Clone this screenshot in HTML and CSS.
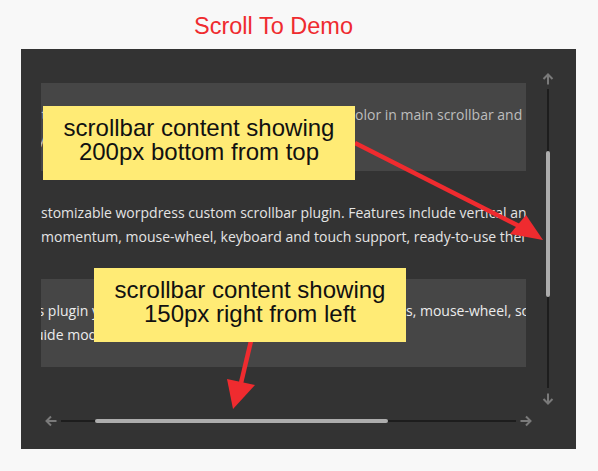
FILE: index.html
```html
<!DOCTYPE html>
<html lang="en">
<head>
<meta charset="utf-8">
<title>Scroll To Demo</title>
<link rel="stylesheet" href="styles.css">
</head>
<body>
<header class="header">
  <h1 class="title">Scroll To Demo</h1>
</header>
<div class="demo">
  <div class="viewport">
    <div class="content">
      <div class="panel panel-muted">
        <p class="line line-cut-s"><span class="lead lead-top">lt can also have a custom scrollbar theme and a custom scrollbar c</span>olor in main scrollbar and content</p>
        <p class="line line-cut-s">y and thumb on the rail.</p>
      </div>
      <div class="para">
        <p class="line">stomizable worpdress custom scrollbar plugin. Features include vertical and/or horizontal</p>
        <p class="line">momentum, mouse-wheel, keyboard and touch support, ready-to-use themes and customization</p>
      </div>
      <div class="panel panel-bright">
        <p class="line line-cut-is"><span class="lead lead-bottom">is plugin you can use a custom scrollbar with scrolling momentum and buttons</span>s, mouse-wheel, scroll</p>
        <p class="line line-cut-u">uide mode and more.</p>
      </div>
    </div>
  </div>
  <div class="vbar">
    <svg class="arrow" viewBox="0 0 12 12"><path d="M6 11.5V1.5M1.5 6L6 1.5L10.5 6"/></svg>
    <div class="vtrack"><div class="vthumb"></div></div>
    <svg class="arrow" viewBox="0 0 12 12"><path d="M6 0.5V10.5M1.5 6L6 10.5L10.5 6"/></svg>
  </div>
  <div class="hbar">
    <svg class="arrow" viewBox="0 0 12 12"><path d="M11.5 6H1.5M6 1.5L1.5 6L6 10.5"/></svg>
    <div class="htrack"><div class="hthumb"></div></div>
    <svg class="arrow" viewBox="0 0 12 12"><path d="M0.5 6H10.5M6 1.5L10.5 6L6 10.5"/></svg>
  </div>
</div>
<svg class="pointers" viewBox="0 0 598 471">
  <line x1="355" y1="143" x2="521" y2="227"/>
  <polygon points="543,240 526,215 510,234"/>
  <line x1="251" y1="341" x2="241" y2="383"/>
  <polygon points="233,409 227,379 255,385"/>
</svg>
<div class="note note-top">scrollbar content showing<br>200px bottom from top</div>
<div class="note note-bottom">scrollbar content showing<br>150px right from left</div>
</body>
</html>
```

FILE: styles.css
```css
html, body {
  margin: 0;
  padding: 0;
}
body {
  background: #f8f8f8;
  width: 598px;
  height: 471px;
  overflow: hidden;
  position: relative;
  font-family: "Liberation Sans", Arial, sans-serif;
}
.header {
  height: 49px;
  box-sizing: border-box;
  padding-top: 13px;
}
.title {
  margin: 0;
  width: 547px;
  text-align: center;
  font-family: "Liberation Sans", Arial, sans-serif;
  font-weight: normal;
  font-size: 23.5px;
  line-height: 26px;
  color: #ef2b2f;
}
.demo {
  margin-left: 21px;
  width: 555px;
  height: 400px;
  box-sizing: border-box;
  padding: 20px 0 0 20px;
  background: #333333;
  display: grid;
  grid-template-columns: 485px 1fr;
  grid-template-rows: 340px 1fr;
}
.viewport {
  overflow: hidden;
  font-family: "Open Sans", "Noto Sans", sans-serif;
  font-size: 14px;
  line-height: 24px;
}
.content {
  padding-top: 14px;
}
.line {
  margin: 0;
  white-space: nowrap;
}
.line-cut-s {
  text-indent: -3px;
}
.line-cut-is {
  text-indent: -7px;
}
.line-cut-u {
  text-indent: -6px;
}
.lead {
  display: inline-block;
  overflow: hidden;
  text-align: left;
  text-indent: 0;
  vertical-align: top;
}
.lead-top {
  width: 317px;
}
.lead-bottom {
  width: 372px;
}
.panel {
  background: #464646;
  padding: 20px 0;
  width: 700px;
}
.panel-muted {
  color: #bdbdbd;
}
.panel-bright {
  color: #ececec;
}
.para {
  color: #e4e4e4;
  padding: 30px 0;
}
.arrow {
  width: 12px;
  height: 12px;
  display: block;
  flex: none;
}
.arrow path {
  fill: none;
  stroke: #7a7a7a;
  stroke-width: 2;
}
.vbar {
  grid-column: 2;
  grid-row: 1;
  margin: 4px 0 0 16px;
  width: 12px;
  height: 332px;
  display: flex;
  flex-direction: column;
  align-items: center;
}
.vtrack {
  margin: 4px 0 5px;
  width: 2px;
  height: 299px;
  background: #1d1d1d;
  padding-top: 62px;
  box-sizing: border-box;
}
.vthumb {
  width: 4px;
  height: 146px;
  margin-left: -1px;
  background: #adadad;
  border-radius: 2px;
}
.hbar {
  grid-column: 1 / span 2;
  grid-row: 2;
  margin: 6px 0 0 4px;
  height: 12px;
  display: flex;
  align-items: center;
}
.htrack {
  margin: 0 4px;
  width: 455px;
  height: 2px;
  background: #1d1d1d;
  padding-left: 34px;
  box-sizing: border-box;
}
.hthumb {
  width: 293px;
  height: 4px;
  margin-top: -1px;
  background: #adadad;
  border-radius: 2px;
}
.pointers {
  position: absolute;
  left: 0;
  top: 0;
  width: 598px;
  height: 471px;
  pointer-events: none;
}
.pointers line {
  stroke: #ef2b2f;
  stroke-width: 4.5;
}
.pointers polygon {
  fill: #ef2b2f;
}
.note {
  position: absolute;
  width: 312px;
  height: 74px;
  box-sizing: border-box;
  padding-top: 10px;
  background: #ffeb75;
  color: #111;
  font-family: "Liberation Sans", Arial, sans-serif;
  font-size: 24px;
  line-height: 24px;
  text-align: center;
}
.note-top {
  left: 43px;
  top: 106px;
}
.note-bottom {
  left: 94px;
  top: 268px;
}
```
